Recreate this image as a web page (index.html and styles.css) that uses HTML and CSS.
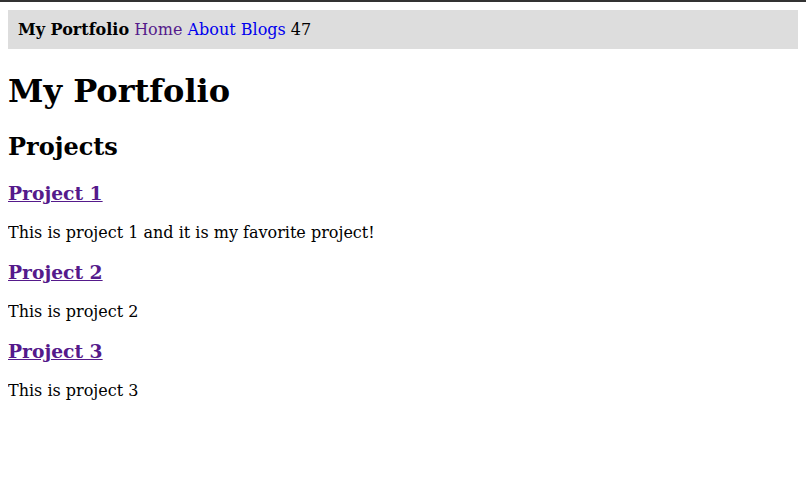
FILE: index.html
```html
<!DOCTYPE html>
<html>
<head>
<meta charset="utf-8">
<title>My Portfolio</title>
<link rel="stylesheet" href="styles.css">
</head>
<body>
<nav class="topnav">
  <strong class="brand">My Portfolio</strong>
  <a class="nav-link visited" href="#">Home</a>
  <a class="nav-link" href="#">About</a>
  <a class="nav-link" href="#">Blogs</a>
  <span>47</span>
</nav>
<h1 class="page-title">My Portfolio</h1>
<h2>Projects</h2>
<h3><a class="project-link" href="#">Project 1</a></h3>
<p>This is project 1 and it is my favorite project!</p>
<h3><a class="project-link" href="#">Project 2</a></h3>
<p>This is project 2</p>
<h3><a class="project-link" href="#">Project 3</a></h3>
<p>This is project 3</p>
</body>
</html>
```
FILE: styles.css
```css
html {
  border-top: 2px solid #333;
}
body {
  margin: 8px;
  font-family: "DejaVu Serif", serif;
  font-size: 16px;
  line-height: 1.2;
  color: #000;
  background: #fff;
}
.topnav {
  background: #ddd;
  padding: 10px;
  box-sizing: border-box;
  width: calc(100vw - 8px);
}
.page-title {
  line-height: 1.28;
}
.nav-link {
  color: #0000ee;
  text-decoration: none;
}
.nav-link.visited {
  color: #551a8b;
}
.project-link {
  color: #551a8b;
}
```
